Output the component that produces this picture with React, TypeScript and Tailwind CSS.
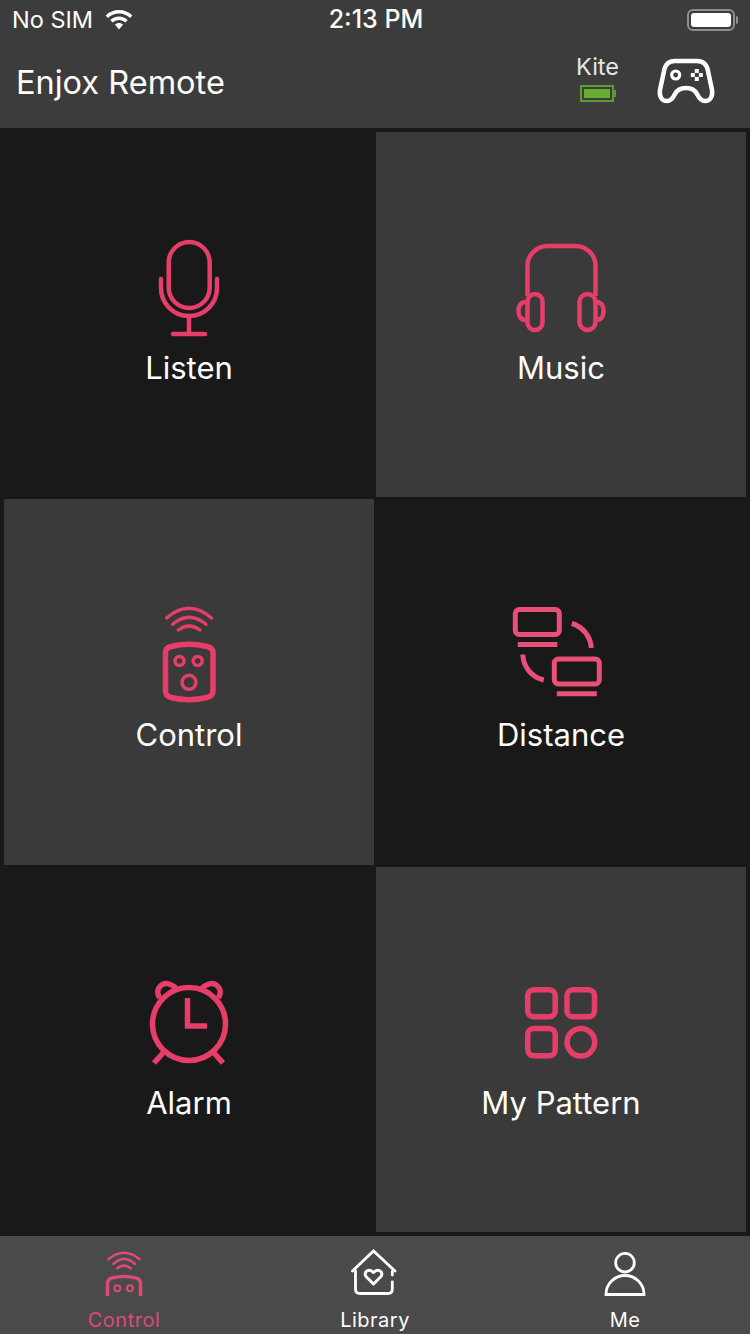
import type { ReactNode } from 'react';

const PINK = '#e63e69';

function Icon({ children, viewBox = '0 0 120 120' }: { children: ReactNode; viewBox?: string }) {
  return (
    <svg width="120" height="120" viewBox={viewBox} fill="none" stroke={PINK} className="block">
      {children}
    </svg>
  );
}

const listenIcon = (
  <Icon>
    <g strokeWidth="4.5" strokeLinecap="round" transform="translate(1 0)">
      <rect x="38.7" y="12" width="41" height="66" rx="20.5" />
      <path d="M31 49V58a28 28 0 0 0 56 0V49" />
      <path d="M59 86V104M43 104H75" />
    </g>
  </Icon>
);

const musicIcon = (
  <Icon>
    <g strokeWidth="4.5" transform="translate(-1.5 0)">
      <path d="M28 66V36a20 20 0 0 1 20-20H76a20 20 0 0 1 20 20V66" />
      <rect x="28" y="64" width="15" height="36" rx="7.5" />
      <rect x="80" y="64" width="16" height="36" rx="8" />
      <path d="M26 72C21 72 19 76 19 81C19 86 21 90 26 90" />
      <path d="M97 72C102 72 104 76 104 81C104 86 102 90 97 90" />
    </g>
  </Icon>
);

const controlIcon = (
  <Icon viewBox="0 2 120 120">
    <g strokeWidth="3.4" strokeLinecap="round" transform="translate(1 0)">
      <path d="M36.7 23Q59 3.6 81.5 23" />
      <path d="M42.7 29.3Q59 15.3 76 29.3" />
      <path d="M48.3 35Q59 27 70 35" />
      <path strokeWidth="5.5" d="M35.5 58Q35.5 53 41 51.5Q59 47 77 51.5Q83 53 83 58V96Q83 101 77 102.5Q59 107 41 102.5Q35.5 101 35.5 96Z" />
      <circle cx="49.5" cy="66" r="4.5" />
      <circle cx="67.7" cy="66" r="4.5" />
      <circle cx="59" cy="87.3" r="7" />
    </g>
  </Icon>
);

const distanceIcon = (
  <Icon viewBox="0 2 120 120">
    <g strokeWidth="5" stroke="#ea4f7a" transform="translate(-1.2 0)">
      <rect x="15.5" y="14.5" width="44" height="25" rx="4" />
      <path d="M18 49.5H57.5" />
      <rect x="54.5" y="64" width="45" height="25" rx="4" />
      <path d="M57 98.7H97" />
      <path d="M72 28.5A27 27 0 0 1 91.5 53" />
      <path d="M23 59.5A27 27 0 0 0 44 85" />
    </g>
  </Icon>
);

const alarmIcon = (
  <Icon>
    <g strokeWidth="5.5" transform="translate(1 0)">
      <circle cx="59" cy="59" r="36.5" />
      <path d="M57.5 33V61H77" />
      <path d="M29.5 33C24 23 33 17 39 19C42 20 44.5 21 46 23.5" />
      <path d="M88.5 33C94 23 85 17 79 19C76 20 73.5 21 72 23.5" />
      <path d="M33 88L24 98M84 88L93 98" />
    </g>
  </Icon>
);

const patternIcon = (
  <Icon>
    <g strokeWidth="5.5" transform="translate(-0.8 0)">
      <rect x="27.5" y="24.8" width="27.5" height="27" rx="6" />
      <rect x="66.8" y="24.8" width="27.5" height="27" rx="6" />
      <rect x="27.5" y="63.5" width="27.5" height="27.3" rx="6" />
      <circle cx="80.7" cy="77.3" r="13.8" />
    </g>
  </Icon>
);

const cells = [
  { label: 'Listen', icon: listenIcon, light: false },
  { label: 'Music', icon: musicIcon, light: true },
  { label: 'Control', icon: controlIcon, light: true },
  { label: 'Distance', icon: distanceIcon, light: false },
  { label: 'Alarm', icon: alarmIcon, light: false },
  { label: 'My Pattern', icon: patternIcon, light: true },
];

function StatusBar() {
  return (
    <div className="grid grid-cols-3 items-center h-10 pl-[12px] pr-[12px] text-white text-[23.5px]">
      <div className="flex items-center gap-[12px]">
        <span>No SIM</span>
        <svg width="28" height="20" viewBox="0 0 28 20" fill="white">
          <path d="M14 0C8.8 0 4.2 2 .6 5.4L3 8C5.9 5.2 9.8 3.5 14 3.5S22.1 5.2 25 8L27.4 5.4C23.8 2 19.2 0 14 0Z" />
          <path d="M14 6.6C10.6 6.6 7.6 7.9 5.3 10.1L7.7 12.6C9.4 11 11.6 10 14 10S18.6 11 20.3 12.6L22.7 10.1C20.4 7.9 17.4 6.6 14 6.6Z" />
          <path d="M14 13C12.4 13 11 13.6 9.9 14.6L14 19.5L18.1 14.6C17 13.6 15.6 13 14 13Z" />
        </svg>
      </div>
      <span className="text-center font-medium text-[25px] pl-[2px]">2:13 PM</span>
      <div className="flex items-center justify-end gap-[1px]">
        <div className="w-[48px] h-[22px] rounded-[6px] border-2 border-[#8e8e8e] p-[2px]">
          <div className="w-full h-full rounded-[3px] bg-white" />
        </div>
        <div className="w-[2px] h-2 rounded-r-sm bg-[#8e8e8e]" />
      </div>
    </div>
  );
}

function NavBar() {
  return (
    <div className="flex items-center h-[88px] pl-[16px] pr-[34px] text-white">
      <h1 className="text-[32.5px] leading-none font-normal pb-[1px]">Enjox Remote</h1>
      <div className="ml-auto flex flex-col items-center mr-[37px] pb-[12px]">
        <span className="text-[23.5px] leading-[26px] text-[#e6e6e6]">Kite</span>
        <div className="flex items-center mt-[5px] pl-[1px]">
          <div className="w-[34px] h-[17px] border-2 border-[#5c9a34] bg-[#3c3c3c] p-[2px]">
            <div className="w-full h-full bg-[#6aaa35]" />
          </div>
          <div className="w-[2px] h-[7px] bg-[#5c9a34]" />
        </div>
      </div>
      <svg width="60" height="50" viewBox="0 0 60 50" fill="none" stroke="white" strokeWidth="4.5" className="block mb-[6px]">
        <path d="M19 5H41C48 5 51 9 52 15L56 34C57 41 54 45 49 45C45 45 43 42 41 38C39 34 36 32 30 32C24 32 21 34 19 38C17 42 15 45 11 45C6 45 3 41 4 34L8 15C9 9 12 5 19 5Z" />
        <circle cx="19.7" cy="19" r="4" strokeWidth="3.2" />
        <g fill="white" stroke="none">
          <rect x="38.8" y="13" width="4" height="4" />
          <rect x="38.8" y="21" width="4" height="4" />
          <rect x="34.8" y="17" width="4" height="4" />
          <rect x="42.8" y="17" width="4" height="4" />
        </g>
      </svg>
    </div>
  );
}

function Cell({ label, icon, light }: { label: string; icon: ReactNode; light: boolean }) {
  return (
    <div className={light ? 'flex flex-col items-center pt-[98px] bg-[#3a3a3a]' : 'flex flex-col items-center pt-[98px]'}>
      {icon}
      <span className="text-[31px] leading-9 text-white">{label}</span>
    </div>
  );
}

function TabBar() {
  return (
    <nav className="grid grid-cols-3 h-[98px] bg-[#4a4a4a]">
      <div className="flex flex-col items-center pt-[10px] text-[#dd4a75] -translate-x-[1px]">
        <svg width="60" height="60" viewBox="0 0 60 60" fill="none" stroke="currentColor" strokeWidth="2.5" className="block">
          <path d="M14.3 13.3Q30 .1 45.7 13.3" strokeLinecap="round" />
          <path d="M19.3 18Q30 8 41 18" strokeLinecap="round" />
          <path d="M23.3 22.3Q30 17 36.7 22.3" strokeLinecap="round" />
          <path strokeWidth="3.6" d="M13.5 50V38Q13.5 33 18 32Q30 29 42 32Q46.5 33 46.5 38V50" />
          <circle cx="23.3" cy="42.3" r="3" strokeWidth="2" />
          <circle cx="36" cy="42.3" r="3" strokeWidth="2" />
        </svg>
        <span className="text-[20px] leading-6 mt-[2px] tracking-[0.5px]">Control</span>
      </div>
      <div className="flex flex-col items-center pt-[10px] text-white">
        <svg width="60" height="60" viewBox="0 0 60 60" fill="none" stroke="currentColor" strokeWidth="2.8" strokeLinecap="round" className="block">
          <path d="M7.5 25L28.5 5L50 25" />
          <path d="M10.5 25V43Q10.5 47.5 15 47.5H43Q47.3 47.5 47.3 43V36M47.3 25.5V29" />
          <path d="M28.5 38L21 30.5C18 26 24 21.5 28.5 26.5C33 21.5 39 26 36 30.5Z" strokeWidth="3" strokeLinejoin="round" />
        </svg>
        <span className="text-[20px] leading-6 mt-[2px] tracking-[0.5px]">Library</span>
      </div>
      <div className="flex flex-col items-center pt-[10px] text-white">
        <svg width="60" height="60" viewBox="0 0 60 60" fill="none" stroke="currentColor" strokeWidth="2.8" className="block">
          <circle cx="30" cy="16.7" r="9.3" />
          <path d="M11 48.5A19 19 0 0 1 49 48.5Z" />
        </svg>
        <span className="text-[20px] leading-6 mt-[2px] tracking-[0.5px]">Me</span>
      </div>
    </nav>
  );
}

export default function App() {
  return (
    <div className="flex flex-col h-[1334px] w-[750px] bg-[#191919] font-['Inter','Roboto',sans-serif]">
      <header className="h-[128px] bg-[#3c3c3c]">
        <StatusBar />
        <NavBar />
      </header>
      <main className="flex-1 grid grid-cols-2 grid-rows-3 gap-[2px] p-[4px]">
        {cells.map((cell) => (
          <Cell key={cell.label} {...cell} />
        ))}
      </main>
      <TabBar />
    </div>
  );
}
